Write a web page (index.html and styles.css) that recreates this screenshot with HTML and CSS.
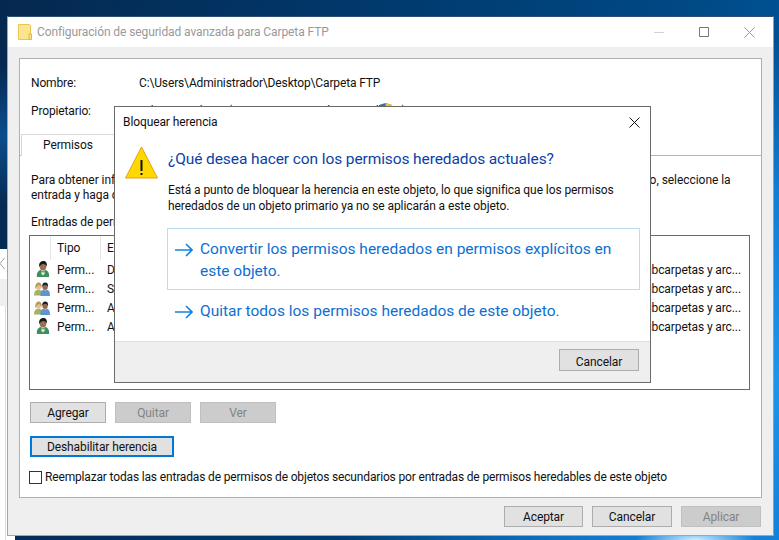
FILE: index.html
```html
<!DOCTYPE html>
<html lang="es">
<head>
<meta charset="utf-8">
<title>Configuración de seguridad avanzada</title>
<link rel="stylesheet" href="styles.css">
</head>
<body>
<svg class="defs" width="0" height="0" aria-hidden="true">
  <defs>
    <symbol id="user" viewBox="0 0 14 16">
      <path d="M1 16c-.7-3.800 1.200-6.400 3.600-7l2.400 1.200 2.400-1.200c2.400.6 4.300 3.200 3.600 7z" fill="#3f8f5e"/>
      <path d="M5.800 10l1.200 1.800 1.200-1.800 .6 2.800-1.800 1.800-1.800-1.800z" fill="#d5ecd9"/>
      <ellipse cx="7" cy="5.600" rx="3.300" ry="3.900" fill="#9c6f55"/>
      <path d="M3.300 6C2.500 2 4.800 0 7.300 0c2.600 0 4.100 1.900 3.500 5.600-.7-1.700-1.800-2.500-3.400-2.600-1.500 0-3.100.9-4.100 3z" fill="#141d14"/>
    </symbol>
    <symbol id="users" viewBox="0 0 16 14">
      <path d="M0 13.500c0-3.300 1.200-5.200 3.200-5.700h2.600c1.300.4 2.100 1.400 2.500 2.800v2.900z" fill="#a3b264"/>
      <ellipse cx="4.500" cy="4.400" rx="2.700" ry="3.200" fill="#e4bd94"/>
      <path d="M1.400 7C.8 2.500 2.700.4 4.600.4s3.500 1.800 3 5.800C7 4.200 5.800 3 4.400 3 3.200 3.800 2.200 5 1.400 7z" fill="#b29d50"/>
      <path d="M6.400 14c-.4-3.800 1-5.800 3.200-6.300l1.600.8 1.600-.8c2.200.5 3.500 2.500 3.100 6.300z" fill="#5f95cc"/>
      <ellipse cx="11.100" cy="4.700" rx="2.700" ry="3.200" fill="#96684e"/>
      <path d="M8.300 5C7.800 2 9.300.5 11.200.5c2 0 3.200 1.500 2.700 4.300-.6-1.300-1.600-1.900-2.800-2-1.100 0-2.100.8-2.800 2.200z" fill="#141c28"/>
    </symbol>
  </defs>
</svg>

<div class="behind">
  <div class="behind-top">
    <svg class="chevron" width="5" height="13" viewBox="0 0 5 13"><path d="M5 .5L0 6.500 5 12.500" fill="none" stroke="#a0a0a0"/></svg>
  </div>
  <div class="behind-band"></div>
  <div class="behind-low"></div>
</div>

<main class="window">
  <header class="titlebar">
    <svg class="folder" width="14" height="16" viewBox="0 0 14 16">
      <path d="M.5.500h11l1 1v14H.5z" fill="#fde48f" stroke="#ecc452"/>
      <path d="M11 10h2.500v5.500H11z" fill="#fde48f" stroke="#e2b43c"/>
    </svg>
    <span class="title">Configuración de seguridad avanzada para Carpeta FTP</span>
    <div class="caption">
      <svg width="10" height="10" viewBox="0 0 10 10"><path d="M0 5.500h10" stroke="#d2d2d2"/></svg>
      <svg width="10" height="10" viewBox="0 0 10 10"><path d="M.5.500h9v9h-9z" fill="none" stroke="#7a7a7a"/></svg>
      <svg width="11" height="11" viewBox="0 0 11 11"><path d="M.5.500l10 10M10.500.500l-10 10" stroke="#999"/></svg>
    </div>
  </header>

  <div class="content">
    <section class="panel">
      <div class="meta">
        <div class="meta-row"><span class="meta-label">Nombre:</span><span>C:\Users\Administrador\Desktop\Carpeta FTP</span></div>
        <div class="meta-row"><span class="meta-label">Propietario:</span>
          <span class="owner">Administradores (SERVIDOR-FTP\Administradores)
            <svg class="shield" width="13" height="14" viewBox="0 0 13 14"><path d="M6.500 0L13 2v6c0 3-3 5-6.500 6C3 13 0 11 0 8V2z" fill="#2e6fb5"/><path d="M6.500 0L13 2v5H6.500z" fill="#f0c030"/></svg>
          </span>
        </div>
      </div>
      <div class="tabs"><div class="tab">Permisos</div></div>
      <div class="tab-body">
        <p class="help">Para obtener información adicional, haga doble clic en una entrada de permiso. Para modificar una entrada de permiso, seleccione la<br>entrada y haga clic en Editar (si está disponible).</p>
        <p class="entries">Entradas de permiso:</p>
        <div class="list">
          <div class="list-head">
            <span class="col-icon"></span><span class="col-type">Tipo</span><span class="col-who">Entidad de seguridad</span>
          </div>
          <div class="list-row"><svg class="ico" width="14" height="16"><use href="#user"/></svg><span class="col-type">Perm...</span><span class="col-who">Domain Admins</span><span class="col-scope">Esta carpeta, subcarpetas y arc...</span></div>
          <div class="list-row"><svg class="ico group" width="16" height="14"><use href="#users"/></svg><span class="col-type">Perm...</span><span class="col-who">SYSTEM</span><span class="col-scope">Esta carpeta, subcarpetas y arc...</span></div>
          <div class="list-row"><svg class="ico group" width="16" height="14"><use href="#users"/></svg><span class="col-type">Perm...</span><span class="col-who">Administradores</span><span class="col-scope">Esta carpeta, subcarpetas y arc...</span></div>
          <div class="list-row"><svg class="ico" width="14" height="16"><use href="#user"/></svg><span class="col-type">Perm...</span><span class="col-who">Administrador</span><span class="col-scope">Esta carpeta, subcarpetas y arc...</span></div>
        </div>
        <div class="actions">
          <button class="btn">Agregar</button>
          <button class="btn off">Quitar</button>
          <button class="btn off">Ver</button>
        </div>
        <button class="btn focus">Deshabilitar herencia</button>
        <label class="check"><span class="box"></span><span>Reemplazar todas las entradas de permisos de objetos secundarios por entradas de permisos heredables de este objeto</span></label>
      </div>
    </section>
    <footer class="foot">
      <button class="btn wide first">Aceptar</button>
      <button class="btn wide">Cancelar</button>
      <button class="btn wide off">Aplicar</button>
    </footer>
  </div>
</main>

<div class="dialog">
  <div class="dlg-title">
    <span>Bloquear herencia</span>
    <svg width="11" height="11" viewBox="0 0 11 11"><path d="M.5.500l10 10M10.500.500l-10 10" stroke="#111"/></svg>
  </div>
  <div class="dlg-main">
    <svg class="warn" width="33" height="33" viewBox="0 0 33 33">
      <path d="M16.500 1L32.500 32H.5z" fill="#ffd800" stroke="#e3a21a" stroke-linejoin="round"/>
      <path d="M15.500 14h2v11h-2zM15.500 27h2v2h-2z" fill="#111"/>
    </svg>
    <div class="dlg-text">
      <h1 class="dlg-head">¿Qué desea hacer con los permisos heredados actuales?</h1>
      <p class="dlg-copy">Está a punto de bloquear la herencia en este objeto, lo que significa que los permisos<br>heredados de un objeto primario ya no se aplicarán a este objeto.</p>
    </div>
  </div>
  <a class="cmd hot"><svg width="18" height="14" viewBox="0 0 18 14"><path d="M0 7h17M11 1l6 6-6 6" fill="none" stroke="#1283e0" stroke-width="1.600"/></svg><span>Convertir los permisos heredados en permisos explícitos en este objeto.</span></a>
  <a class="cmd"><svg width="18" height="14" viewBox="0 0 18 14"><path d="M0 7h17M11 1l6 6-6 6" fill="none" stroke="#1283e0" stroke-width="1.600"/></svg><span>Quitar todos los permisos heredados de este objeto.</span></a>
  <div class="dlg-foot"><button class="btn wide">Cancelar</button></div>
</div>
</body>
</html>
```

FILE: styles.css
```css
* { box-sizing: border-box; }
html, body { margin: 0; padding: 0; }
body {
  position: relative;
  width: 779px;
  height: 540px;
  overflow: hidden;
  font: 12px/16px Roboto, "Liberation Sans", sans-serif;
  letter-spacing: -0.1px;
  color: #111;
  background:
    radial-gradient(60px 14px at 695px 540px, #cfeeff 0, rgba(120,200,250,0) 100%),
    radial-gradient(500px 340px at 100% 70%, #1a96ea 0, rgba(20,130,220,.9) 55%, rgba(0,70,130,0) 100%),
    radial-gradient(120px 70px at 0 135px, #0b4e8c 0, rgba(11,78,140,0) 100%),
    linear-gradient(100deg, #05284f 0, #003a6e 45%, #004a86 80%, #0058a0 100%);
}
.defs { position: absolute; }

.behind {
  position: absolute;
  left: 0; top: 249px;
  width: 15px; height: 291px;
  display: flex;
  flex-direction: column;
  background: #fff;
}
.behind-top { height: 30px; position: relative; padding-top: 8px; }
.chevron { display: block; }
.behind-band { height: 27px; background: #efefef; }
.behind-low { flex: 1; background: #fff; border-right: 1px solid #ddd; width: 6px; }

.window {
  position: absolute;
  left: 7px; top: 16px;
  width: 767px; height: 520px;
  display: flex;
  flex-direction: column;
  background: #efefef;
  border: 1px solid #a6a6a6;
  border-top-color: #2b4f75;
  border-right-color: #8aa0b5;
}
.titlebar {
  height: 30px;
  display: flex;
  align-items: center;
  padding-left: 10px;
  background: #fff;
}
.folder { margin-right: 5px; flex: none; }
.title { color: #999; }
.caption {
  margin-left: auto;
  margin-right: 18px;
  display: flex;
  align-items: center;
  gap: 35px;
}
.caption svg { display: block; }

.content { flex: 1; display: flex; flex-direction: column; padding: 11px 11px 0; }
.panel {
  height: 440px;
  display: flex;
  flex-direction: column;
  background: #fff;
  border: 1px solid #b0b0b0;
}
.meta { padding: 16px 11px 0; display: flex; flex-direction: column; gap: 12px; height: 75px; letter-spacing: -0.14px; }
.meta-row { display: flex; }
.meta-label { width: 108px; flex: none; }
.owner { color: #222; position: relative; white-space: nowrap; }
.shield { position: absolute; left: 240px; top: 0; }

.tabs { height: 22px; border-bottom: 1px solid #b5b5b5; padding-left: 1px; }
.tab {
  width: 100px; height: 22px;
  padding: 2px 0 0 21px;
  background: #fff;
  border: 1px solid #d9d9d9;
  border-bottom: 0;
}
.tab-body { flex: 1; padding: 17px 9px 0; }
.help { margin: 0 2px; line-height: 15px; white-space: nowrap; letter-spacing: -0.05px; }
.entries { margin: 12px 2px 5px; line-height: 15px; height: 15px; }
.list {
  width: 721px; height: 155px;
  border: 1px solid #6a6a6a;
  background: #fff;
}
.list-head { display: flex; height: 24px; line-height: 25px; overflow: hidden; white-space: nowrap; }
.list-head span { border-right: 1px solid #e5e5e5; height: 24px; padding-left: 6px; }
.col-icon { width: 21px; padding: 0 !important; flex: none; }
.col-type { width: 50px; flex: none; padding-left: 6px; }
.col-who { width: 120px; flex: none; padding-left: 6px; white-space: nowrap; overflow: hidden; }
.list-row {
  position: relative;
  display: flex;
  height: 19px;
  line-height: 21px;
  padding-left: 21px;
  white-space: nowrap;
}
.ico { position: absolute; left: 6px; top: 1px; }
.ico.group { left: 4px; top: 3px; }
.list-row .col-who { flex: 1; }
.col-scope { padding-right: 8px; }

.actions { display: flex; gap: 9px; margin: 12px 0 13px 1px; }
.btn {
  height: 21px;
  width: 76px;
  padding: 1px 0 0;
  font: inherit;
  letter-spacing: inherit;
  line-height: 16px;
  color: #111;
  background: #e1e1e1;
  border: 1px solid #adadad;
  display: block;
}
.btn.off { background: #ccc; border-color: #bfbfbf; color: #838383; }
.btn.focus { width: 144px; margin-left: 1px; border: 2px solid #0078d7; }
.btn.wide { width: 80px; }
.btn.first { width: 79px; }
.check { display: flex; align-items: center; gap: 3px; margin-top: 12px; white-space: nowrap; letter-spacing: -0.16px; }
.box { width: 13px; height: 13px; flex: none; background: #fff; border: 1px solid #333; }

.foot { display: flex; justify-content: flex-end; gap: 9px; padding: 8px 1px 0 0; }

.dialog {
  position: absolute;
  left: 114px; top: 106px;
  width: 537px; height: 277px;
  display: flex;
  flex-direction: column;
  background: #fff;
  border: 1px solid #6a6a6a;
}
.dlg-title {
  height: 30px;
  flex: none;
  display: flex;
  justify-content: space-between;
  align-items: center;
  padding: 0 10px 0 8px;
}
.dlg-main { display: flex; padding: 9px 0 0 10px; gap: 10px; height: 91px; flex: none; }
.warn { flex: none; }
.dlg-text { min-width: 0; }
.dlg-head { margin: 3px 0 14px; font-size: 15.5px; line-height: 20px; font-weight: 400; color: #0a3fa8; white-space: nowrap; }
.dlg-copy { margin: 0; line-height: 15.5px; white-space: nowrap; letter-spacing: -0.08px; }
.cmd {
  display: flex;
  gap: 7px;
  margin-left: 52px;
  width: 473px;
  padding: 9px 7px;
  font-size: 15.5px;
  letter-spacing: 0;
  line-height: 22px;
  color: #0c6fd1;
  border: 1px solid transparent;
}
.cmd svg { flex: none; margin-top: 5px; }
.cmd.hot { height: 62px; border-color: #bcdcf4; }
.cmd.hot span { line-height: 21.5px; padding-top: 1px; }
.dlg-foot {
  margin-top: auto;
  height: 41px;
  padding: 7px 11px 0 0;
  display: flex;
  justify-content: flex-end;
  background: #efefef;
  border-top: 1px solid #dfdfdf;
}
.dlg-foot .btn { height: 22px; padding-top: 3px; }
```
